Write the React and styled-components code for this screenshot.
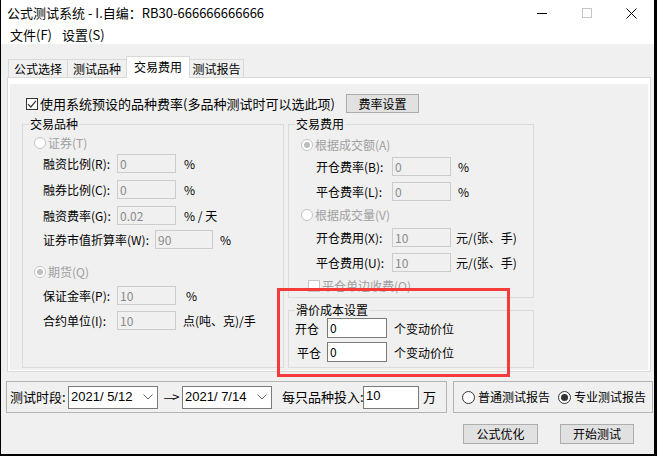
import React from 'react';
import styled, { createGlobalStyle } from 'styled-components';

const Global = createGlobalStyle`
  html, body { margin: 0; padding: 0; background: #000; }
  body {
    font-family: "Noto Sans CJK SC", "Liberation Sans", sans-serif;
    font-size: 12px;
    color: #000;
  }
  #root { width: 657px; height: 456px; overflow: hidden; }
`;

const Window = styled.div`
  position: relative;
  width: 653px;
  height: 454px;
  margin-left: 1px;
  background: #f0f0f0;
  display: flex;
  flex-direction: column;
`;

const TitleBar = styled.div`
  height: 26px;
  background: #fff;
  display: flex;
  align-items: center;
`;

const TitleText = styled.div`
  padding-left: 6px;
  font-size: 13px;
  line-height: 26px;
  white-space: nowrap;
`;

const Controls = styled.div`
  margin-left: auto;
  display: flex;
  height: 26px;
`;

const CtrlBtn = styled.div`
  width: 45px;
  height: 26px;
  display: flex;
  align-items: center;
  justify-content: center;
`;

const MenuBar = styled.div`
  height: 18px;
  background: #fff;
  display: flex;
  align-items: center;
  padding-left: 9px;
`;

const MenuItem = styled.div`
  width: 52px;
  font-size: 13px;
  line-height: 18px;
  white-space: nowrap;
`;

const Body = styled.div`
  flex: 1;
  display: flex;
  flex-direction: column;
  padding-left: 5px;
`;

const TabStrip = styled.div`
  position: relative;
  z-index: 1;
  display: flex;
  align-items: flex-end;
  height: 21px;
  margin-top: 12px;
  margin-left: 2px;
`;

const Tab = styled.div`
  box-sizing: border-box;
  width: ${p => p.$w}px;
  height: ${p => (p.$active ? 22 : 18)}px;
  margin-left: ${p => (p.$first ? 0 : -1)}px;
  margin-bottom: ${p => (p.$active ? -1 : 0)}px;
  border: 1px solid #d9d9d9;
  border-bottom: none;
  background: ${p => (p.$active ? '#fff' : '#f0f0f0')};
  position: relative;
  z-index: ${p => (p.$active ? 2 : 1)};
  font-size: 12px;
  line-height: ${p => (p.$active ? 19 : 17)}px;
  text-align: center;
  white-space: nowrap;
`;

const Panel = styled.div`
  box-sizing: border-box;
  margin-left: 1px;
  width: 644px;
  height: 295px;
  border: 1px solid #d9d9d9;
  background: #fff;
  padding: 6px 2px 1px 2px;
  display: flex;
  flex-direction: column;
`;

const PanelInner = styled.div`
  flex: 1;
  background: #f0f0f0;
  padding-left: 12px;
  display: flex;
  flex-direction: column;
`;

const TopRow = styled.div`
  margin-top: 10px;
  height: 19px;
  display: flex;
  align-items: center;
  padding-left: 4px;
`;

const CheckLabel = styled.div`
  width: 320px;
  display: flex;
  align-items: center;
  gap: 2px;
  font-size: 13px;
  line-height: 19px;
  white-space: nowrap;
  color: ${p => (p.$disabled ? '#a0a0a0' : '#000')};
`;

const CheckBox = styled.span`
  box-sizing: border-box;
  flex: none;
  width: 12px;
  height: 12px;
  border: 1px solid ${p => (p.$disabled ? '#c4c4c4' : '#333')};
  background: #fff;
  display: flex;
  align-items: center;
  justify-content: center;
`;

const Button = styled.div`
  box-sizing: border-box;
  width: ${p => p.$w}px;
  height: ${p => p.$h}px;
  background: #e1e1e1;
  border: 1px solid #adadad;
  font-size: 12px;
  line-height: ${p => p.$h - 2}px;
  text-align: center;
  white-space: nowrap;
`;

const GroupsRow = styled.div`
  margin-top: 4px;
  display: flex;
  gap: 4px;
`;

const Column = styled.div`
  display: flex;
  flex-direction: column;
  gap: 5px;
`;

const Group = styled.fieldset`
  box-sizing: border-box;
  margin: 0;
  padding: 0;
  min-width: 0;
  width: ${p => p.$w}px;
  height: ${p => p.$h}px;
  border: 1px solid #dcdcdc;
`;

const GroupTitle = styled.legend`
  margin-left: 6px;
  padding: 0 1px;
  font-size: 12px;
  line-height: 14px;
  white-space: nowrap;
`;

const RadioRow = styled.div`
  margin-top: ${p => p.$mt}px;
  height: 16px;
  padding-left: ${p => p.$pl}px;
  display: flex;
  align-items: center;
  gap: 2px;
  font-size: 12px;
  line-height: 16px;
  white-space: nowrap;
  color: ${p => (p.$disabled ? '#a0a0a0' : '#000')};
`;

const RadioDot = styled.span`
  box-sizing: border-box;
  flex: none;
  width: ${p => p.$size}px;
  height: ${p => p.$size}px;
  border-radius: 50%;
  border: 1px solid ${p => (p.$disabled ? '#c4c4c4' : '#333')};
  background: #fff;
  display: flex;
  align-items: center;
  justify-content: center;
  &::after {
    content: '';
    display: ${p => (p.$checked ? 'block' : 'none')};
    width: ${p => p.$size - 6}px;
    height: ${p => p.$size - 6}px;
    border-radius: 50%;
    background: ${p => (p.$disabled ? '#bcbcbc' : '#333')};
  }
`;

const FieldRow = styled.div`
  margin-top: ${p => p.$mt}px;
  height: ${p => p.$h || 19}px;
  padding-left: ${p => p.$pl}px;
  display: flex;
  align-items: center;
`;

const FieldLabel = styled.span`
  flex: none;
  width: ${p => p.$w}px;
  font-size: 12px;
  line-height: 19px;
  white-space: nowrap;
`;

const TextBox = styled.div`
  box-sizing: border-box;
  flex: none;
  width: ${p => p.$w}px;
  height: ${p => p.$h || 19}px;
  border: 1px solid ${p => (p.$disabled ? '#cccccc' : '#7a7a7a')};
  background: ${p => (p.$disabled ? '#f0f0f0' : '#fff')};
  color: ${p => (p.$disabled ? '#8a8a8a' : '#000')};
  font-size: 12px;
  line-height: 15px;
  padding: 1px 2px;
  white-space: nowrap;
`;

const Unit = styled.span`
  margin-left: ${p => p.$ml}px;
  font-size: 12px;
  line-height: 19px;
  white-space: nowrap;
`;

const SmallCheckRow = styled.div`
  margin-top: ${p => p.$mt}px;
  height: 12px;
  padding-left: ${p => p.$pl}px;
  display: flex;
  align-items: center;
  gap: 2px;
  font-size: 12px;
  line-height: 12px;
  color: #a0a0a0;
  white-space: nowrap;
`;

const Highlight = styled.div`
  position: absolute;
  left: 276px;
  top: 288px;
  width: 233px;
  height: 89px;
  box-sizing: border-box;
  border: 3px solid #f53a3a;
  pointer-events: none;
`;

const BottomBar = styled.div`
  margin-top: 9px;
  height: 32px;
  display: flex;
  gap: 6px;
`;

const BarGroup = styled.div`
  box-sizing: border-box;
  width: ${p => p.$w}px;
  height: 32px;
  border: 1px solid #b4b4b4;
  padding-left: ${p => p.$pl}px;
  display: flex;
  align-items: center;
`;

const BarLabel = styled.span`
  flex: none;
  width: ${p => p.$w}px;
  margin-left: ${p => p.$ml || 0}px;
  font-size: 13px;
  line-height: 18px;
  white-space: nowrap;
`;

const DateBox = styled.div`
  box-sizing: border-box;
  flex: none;
  width: 90px;
  height: 23px;
  border: 1px solid #7a7a7a;
  background: #fff;
  display: flex;
  align-items: center;
  padding: 0 4px 0 2px;
  font-family: "Liberation Sans", sans-serif;
  font-size: 13px;
  white-space: pre;
`;

const DateText = styled.span`
  flex: 1;
  line-height: 18px;
`;

const Arrow = styled.span`
  flex: none;
  width: 24px;
  text-align: center;
  font-size: 13px;
  line-height: 18px;
  white-space: nowrap;
  letter-spacing: -3px;
`;

const MoneyBox = styled.div`
  box-sizing: border-box;
  flex: none;
  width: 56px;
  height: 23px;
  border: 1px solid #7a7a7a;
  background: #fff;
  font-family: "Liberation Sans", sans-serif;
  font-size: 13px;
  line-height: 15px;
  padding: 1px 2px;
`;

const ReportOption = styled.div`
  display: flex;
  align-items: center;
  gap: 3px;
  margin-right: ${p => p.$mr || 0}px;
  font-size: 12px;
  line-height: 18px;
  white-space: nowrap;
`;

const ButtonRow = styled.div`
  margin-top: 11px;
  display: flex;
  justify-content: flex-end;
  gap: 22px;
  padding-right: 20px;
`;

const CheckMark = () => (
  <svg width="10" height="10" viewBox="0 0 10 10">
    <path d="M1 5.2 L3.8 8 L9 1.8" fill="none" stroke="#333" strokeWidth="1.2" />
  </svg>
);

const Chevron = () => (
  <svg width="10" height="6" viewBox="0 0 10 6">
    <path d="M0.5 0.5 L5 5 L9.5 0.5" fill="none" stroke="#606060" strokeWidth="1" />
  </svg>
);

export default function App() {
  return (
    <>
      <Global />
      <Window>
        <TitleBar>
          <TitleText>公式测试系统 - I.自编：RB30-666666666666</TitleText>
          <Controls>
            <CtrlBtn>
              <svg width="10" height="10" viewBox="0 0 10 10">
                <path d="M0 5.5 H10" stroke="#000" strokeWidth="1" />
              </svg>
            </CtrlBtn>
            <CtrlBtn>
              <svg width="10" height="10" viewBox="0 0 10 10">
                <rect x="0.5" y="0.5" width="9" height="9" fill="none" stroke="#c6c6c6" />
              </svg>
            </CtrlBtn>
            <CtrlBtn>
              <svg width="11" height="11" viewBox="0 0 11 11">
                <path d="M0.5 0.5 L10.5 10.5 M10.5 0.5 L0.5 10.5" stroke="#000" strokeWidth="1" />
              </svg>
            </CtrlBtn>
          </Controls>
        </TitleBar>
        <MenuBar>
          <MenuItem>文件(F)</MenuItem>
          <MenuItem>设置(S)</MenuItem>
        </MenuBar>
        <Body>
          <TabStrip>
            <Tab $w={60} $first>公式选择</Tab>
            <Tab $w={60}>测试品种</Tab>
            <Tab $w={64} $active>交易费用</Tab>
            <Tab $w={55}>测试报告</Tab>
          </TabStrip>
          <Panel>
            <PanelInner>
              <TopRow>
                <CheckLabel>
                  <CheckBox><CheckMark /></CheckBox>
                  使用系统预设的品种费率(多品种测试时可以选此项)
                </CheckLabel>
                <Button $w={73} $h={19}>费率设置</Button>
              </TopRow>
              <GroupsRow>
                <Group $w={262} $h={251}>
                  <GroupTitle>交易品种</GroupTitle>
                  <RadioRow $mt={4} $pl={11} $disabled>
                    <RadioDot $size={12} $disabled />证券(T)
                  </RadioRow>
                  <FieldRow $mt={3} $pl={20}>
                    <FieldLabel $w={74}>融资比例(R):</FieldLabel>
                    <TextBox $w={59} $disabled>0</TextBox>
                    <Unit $ml={8}>%</Unit>
                  </FieldRow>
                  <FieldRow $mt={7} $pl={20}>
                    <FieldLabel $w={74}>融券比例(C):</FieldLabel>
                    <TextBox $w={59} $disabled>0</TextBox>
                    <Unit $ml={8}>%</Unit>
                  </FieldRow>
                  <FieldRow $mt={7} $pl={20}>
                    <FieldLabel $w={74}>融资费率(G):</FieldLabel>
                    <TextBox $w={59} $disabled>0.02</TextBox>
                    <Unit $ml={8}>% / 天</Unit>
                  </FieldRow>
                  <FieldRow $mt={5} $pl={20}>
                    <FieldLabel $w={112}>证券市值折算率(W):</FieldLabel>
                    <TextBox $w={58} $disabled>90</TextBox>
                    <Unit $ml={7}>%</Unit>
                  </FieldRow>
                  <RadioRow $mt={15} $pl={11} $disabled>
                    <RadioDot $size={12} $disabled $checked />期货(Q)
                  </RadioRow>
                  <FieldRow $mt={6} $pl={20}>
                    <FieldLabel $w={74}>保证金率(P):</FieldLabel>
                    <TextBox $w={59} $disabled>10</TextBox>
                    <Unit $ml={10}>%</Unit>
                  </FieldRow>
                  <FieldRow $mt={6} $pl={20}>
                    <FieldLabel $w={74}>合约单位(I):</FieldLabel>
                    <TextBox $w={59} $disabled>10</TextBox>
                    <Unit $ml={7}>点(吨、克)/手</Unit>
                  </FieldRow>
                </Group>
                <Column>
                  <Group $w={246} $h={181}>
                    <GroupTitle>交易费用</GroupTitle>
                    <RadioRow $mt={6} $pl={12} $disabled>
                      <RadioDot $size={12} $disabled $checked />根据成交额(A)
                    </RadioRow>
                    <FieldRow $mt={4} $pl={27}>
                      <FieldLabel $w={76}>开仓费率(B):</FieldLabel>
                      <TextBox $w={59} $disabled>0</TextBox>
                      <Unit $ml={7}>%</Unit>
                    </FieldRow>
                    <FieldRow $mt={6} $pl={27}>
                      <FieldLabel $w={76}>平仓费率(L):</FieldLabel>
                      <TextBox $w={59} $disabled>0</TextBox>
                      <Unit $ml={7}>%</Unit>
                    </FieldRow>
                    <RadioRow $mt={6} $pl={12} $disabled>
                      <RadioDot $size={12} $disabled />根据成交量(V)
                    </RadioRow>
                    <FieldRow $mt={5} $pl={27}>
                      <FieldLabel $w={76}>开仓费用(X):</FieldLabel>
                      <TextBox $w={59} $disabled>10</TextBox>
                      <Unit $ml={5}>元/(张、手)</Unit>
                    </FieldRow>
                    <FieldRow $mt={6} $pl={27}>
                      <FieldLabel $w={76}>平仓费用(U):</FieldLabel>
                      <TextBox $w={59} $disabled>10</TextBox>
                      <Unit $ml={5}>元/(张、手)</Unit>
                    </FieldRow>
                    <SmallCheckRow $mt={8} $pl={19}>
                      <CheckBox $disabled />平仓单边收费(O)
                    </SmallCheckRow>
                  </Group>
                  <Group $w={246} $h={65}>
                    <GroupTitle>滑价成本设置</GroupTitle>
                    <FieldRow $mt={1} $pl={6} $h={20}>
                      <FieldLabel $w={32}>开仓</FieldLabel>
                      <TextBox $w={60} $h={20}>0</TextBox>
                      <Unit $ml={7}>个变动价位</Unit>
                    </FieldRow>
                    <FieldRow $mt={4} $pl={8} $h={20}>
                      <FieldLabel $w={30}>平仓</FieldLabel>
                      <TextBox $w={60} $h={20}>0</TextBox>
                      <Unit $ml={7}>个变动价位</Unit>
                    </FieldRow>
                  </Group>
                </Column>
              </GroupsRow>
            </PanelInner>
          </Panel>
          <BottomBar>
            <BarGroup $w={441} $pl={3}>
              <BarLabel $w={58}>测试时段:</BarLabel>
              <DateBox>
                <DateText>2021/ 5/12</DateText>
                <Chevron />
              </DateBox>
              <Arrow>—&gt;</Arrow>
              <DateBox>
                <DateText>2021/ 7/14</DateText>
                <Chevron />
              </DateBox>
              <BarLabel $w={81} $ml={10}>每只品种投入:</BarLabel>
              <MoneyBox>10</MoneyBox>
              <BarLabel $w={14} $ml={4}>万</BarLabel>
            </BarGroup>
            <BarGroup $w={200} $pl={8}>
              <ReportOption $mr={8}>
                <RadioDot $size={13} />普通测试报告
              </ReportOption>
              <ReportOption>
                <RadioDot $size={13} $checked />专业测试报告
              </ReportOption>
            </BarGroup>
          </BottomBar>
          <ButtonRow>
            <Button $w={75} $h={20}>公式优化</Button>
            <Button $w={74} $h={20}>开始测试</Button>
          </ButtonRow>
        </Body>
        <Highlight />
      </Window>
    </>
  );
}
